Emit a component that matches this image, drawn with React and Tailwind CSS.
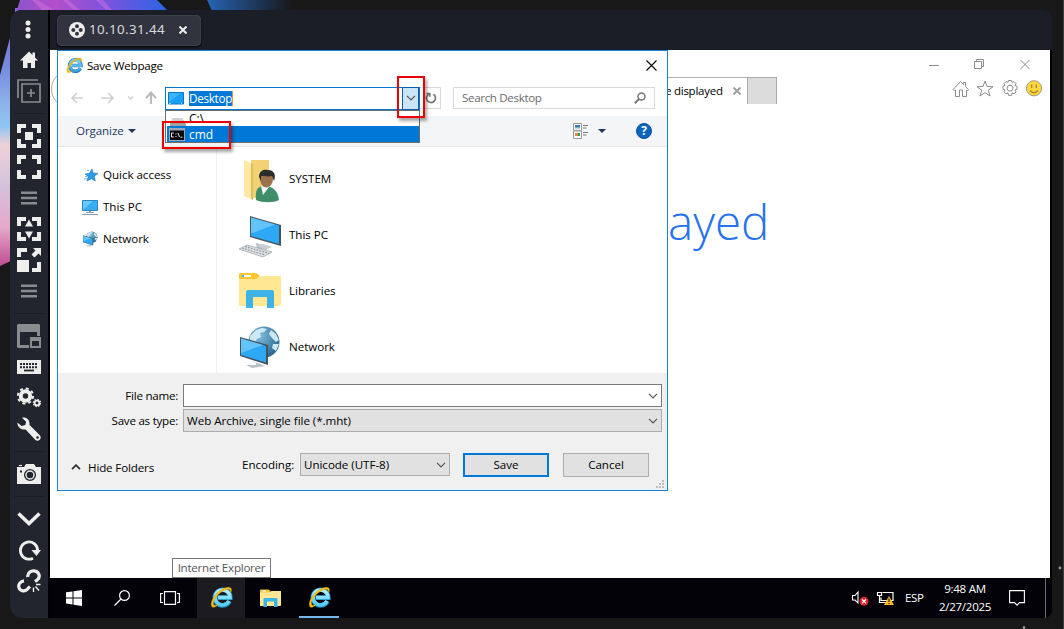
import React from 'react';

function IEIcon({ className, bright }) {
  const blue = bright ? '#55cdf5' : '#3aa0dc';
  const id = bright ? 'ieb' : 'iea';
  return (
    <svg viewBox="0 0 24 24" className={className} fill="none">
      <defs>
        <linearGradient id={id} x1="0" y1="0" x2="0" y2="1">
          <stop offset="0" stopColor={bright ? '#b5effc' : '#7cd3f7'} />
          <stop offset="1" stopColor={blue} />
        </linearGradient>
      </defs>
      <path d="M20.2 16a8.1 8.1 0 1 1 1-3.9H8.6" stroke={bright ? '#1691cc' : '#1f76b6'} strokeWidth="4.8" />
      <path d="M20 15.6a7.8 7.8 0 1 1 .9-3.5H8" stroke={`url(#${id})`} strokeWidth="3.7" />
      <path d="M2.2 21.8C-1 18.5 4.5 8 12 3.8C17 .8 22.5.2 22.4 4.2c0 1-.3 1.9-.9 3C21.9 3 18.500 2.500 13.800 5C7 8.700 2.200 16.500 4 19.600c1 1.300 3.500.5 5-.3-2.500 2.200-5.300 3.800-6.800 2.500Z" fill="#f5bf15" stroke="#d99b06" strokeWidth=".4" />
    </svg>
  );
}

function Chevron({ className = 'h-[6px] w-[10px] text-[#555]', w = 1.2 }) {
  return (
    <svg viewBox="0 0 10 6" className={className} fill="none" stroke="currentColor" strokeWidth={w}>
      <path d="m1 .8 4 4 4-4" />
    </svg>
  );
}

/* ---------- viewer side toolbar ---------- */

const corners = (
  <path d="M2 9V2h7M15 2h7v7M22 15v7h-7M9 22H2v-7" stroke="currentColor" strokeWidth="4" />
);
const lines = (
  <path d="M4 6.700h16M4 12h16M4 17.300h16" stroke="#898b8f" strokeWidth="2.500" />
);

const toolGlyphs = {
  dots: (
    <g fill="currentColor">
      <circle cx="11" cy="6" r="2.500" /><circle cx="11" cy="12.500" r="2.500" /><circle cx="11" cy="19" r="2.500" />
    </g>
  ),
  home: <path d="M12 3.500 3 12.600h3V20h4.500v-5h3.500v5H18v-7.400h3L18 9.500V4.500h-2.500V7Z" fill="currentColor" />,
  add: (
    <g stroke="#898b8f" strokeWidth="1.700">
      <path d="M1 19V1h20M5 5h18v18H5ZM14 10v8M10 14h8" />
    </g>
  ),
  focus: <g>{corners}<path d="M8 8h8v8H8Z" fill="currentColor" /></g>,
  full: corners,
  lines,
  fit: <g>{corners}<path d="m12 2.500 4 7H8ZM12 21.500l-4-7h8Z" fill="currentColor" /></g>,
  scale: (
    <g>
      <path d="M2 9V2h8M22 14v8h-7" stroke="currentColor" strokeWidth="4" />
      <path d="M0 12h12v12H0ZM16 0h8v8l-2.500-2.500-4 4-3-3 4-4Z" fill="currentColor" />
    </g>
  ),
  windows: (
    <g>
      <path fillRule="evenodd" d="M1 0h21l1 1v11h-3V8H3v13h9v3H1l-1-1V1Z" fill="#898b8f" />
      <path fillRule="evenodd" d="M13 13h11v11H13ZM15 17v5h7v-5Z" fill="#898b8f" />
    </g>
  ),
  keyboard: (
    <g>
      <path d="M0 5h24v14H0Z" fill="currentColor" />
      <path d="M3 9h18M3 12.300h18" stroke="#22252e" strokeWidth="2" strokeDasharray="2 1" />
      <path d="M7 15.500h10" stroke="#22252e" strokeWidth="1.800" />
    </g>
  ),
  gears: (
    <g stroke="currentColor">
      <circle cx="8.500" cy="10" r="4.700" strokeWidth="4" />
      <circle cx="8.500" cy="10" r="7.600" strokeWidth="2" strokeDasharray="3 2.970" />
      <circle cx="20" cy="17" r="2.400" strokeWidth="1.900" />
      <circle cx="20" cy="17" r="3.700" strokeWidth="1.100" strokeDasharray="1.500 1.400" />
    </g>
  ),
  wrench: (
    <path
      fillRule="evenodd"
      d="M5 .8c4-1.300 8.300 2 7.400 7l10.400 10.400c2.800 3-1.400 7.600-4.600 4.600L8.600 12.400C4.400 13.400.3 10 .3 5.500l4.300 3.600 3.700-1.200.8-3.200ZM20.500 19.200a1.300 1.300 0 1 0 .1 2.600 1.300 1.300 0 0 0-.1-2.600Z"
      fill="currentColor"
    />
  ),
  camera: (
    <g>
      <path d="M0 5h7l2-3h8l2 3h5v17H0Z" fill="currentColor" />
      <circle cx="13" cy="13" r="5.400" stroke="#22252e" strokeWidth="1.300" />
      <circle cx="13" cy="13" r="3.300" fill="#22252e" />
      <path d="M3 8.500h2v2H3Z" fill="#22252e" /><path d="M2 3.500h3" stroke="currentColor" strokeWidth="1.200" />
    </g>
  ),
  down: <path d="m1.500 6.500 10.500 10 10.500-10" stroke="currentColor" strokeWidth="3.600" />,
  refresh: (
    <g>
      <path d="M16 20.200A8.600 8.600 0 1 1 20.600 12" stroke="currentColor" strokeWidth="2.800" />
      <path d="M14.500 12H24L19.500 18Z" fill="currentColor" />
    </g>
  ),
  unlink: (
    <g stroke="currentColor" strokeWidth="3.200">
      <path d="M10.800 8C10.300 4 14 1.600 17 1.900c5 .5 7 5.800 3.300 9l-2.300 1.600" />
      <path d="M7 11.800C3.300 12.200 1.300 15.500 1.800 18c.8 4 5.600 5.200 8.600 2.200l2.500-2.700" />
      <path d="m16.500 18.500 0 4.500M18.500 17.500l3.500 4M19 15.500h4.500" strokeWidth="1.400" />
    </g>
  ),
};

function SideBar() {
  const items = ['dots', 'home', 'add', '-', 'focus', 'full', 'lines', 'fit', 'scale', 'lines', '-', 'windows', 'keyboard', 'gears', 'wrench', '-', 'camera', '-', 'down', 'refresh', 'unlink'];
  return (
    <aside className="flex h-[608px] w-[38px] shrink-0 flex-col items-center rounded-l-xl bg-[#22252e] pt-[3px] text-[#eeeeec]">
      {items.map((k, i) =>
        k === '-' ? (
          <div key={i} className="flex h-[14px] w-[30px] items-center"><div className="h-px w-full bg-[#1a1d24]" /></div>
        ) : (
          <button key={i} className="flex h-[31px] w-[38px] items-center justify-center">
            <svg viewBox="0 0 24 24" className="h-6 w-6" fill="none">{toolGlyphs[k]}</svg>
          </button>
        )
      )}
    </aside>
  );
}

/* ---------- file dialog ---------- */

function Monitor({ small }) {
  return small ? (
    <svg viewBox="0 0 16 16" className="mt-px h-4 w-4">
      <path d="M.5.500h15v10H.5Z" fill="#36adf5" stroke="#2c84b8" />
      <path d="M1 10 11 1H1Z" fill="#69c9ff" />
      <path d="M7 11h2v1.500H7ZM4 12h8v1H4ZM0 14h16v1H0Z" fill="#8b9ba9" />
    </svg>
  ) : (
    <svg viewBox="0 0 44 44" className="mt-[3px] h-11 w-11">
      <path d="m19 28 13 4-3 3-9-2Z" fill="#abb6bd" /><path d="m18 30 8-1 9 3-7 3Z" fill="#c7ced3" />
      <path d="m13 1 31 9v21L13 22Z" fill="#47525c" />
      <path d="m14 2.500 28 8V29l-28-8Z" fill="#2da8f5" /><path d="m14 2.500 24 7-24 9Z" fill="#63c4fb" />
      <path d="m2 34 8-4 25 7-9 5Z" fill="#dfe3e6" stroke="#a2a9ae" strokeWidth=".8" />
      <path d="m5 33 23 7M8 31.500l24 7" stroke="#969ea4" strokeWidth="1.200" strokeDasharray="2 1" />
    </svg>
  );
}

function NetworkIcon({ className }) {
  return (
    <svg viewBox="0 0 44 44" className={className}>
      <defs><radialGradient id="globe" cx=".35" cy=".3" r=".75"><stop stopColor="#82bfdc" /><stop offset="1" stopColor="#26668f" /></radialGradient></defs>
      <circle cx="27" cy="17" r="15.500" fill="url(#globe)" />
      <path d="m13 11 6-6 6-2 5 1-3 3-4 1 1 4-4 2-2 4-5-2ZM34 5l5 4 3 6-3 2-4-4-3-4ZM36 19l6 0-3 7-4-3Z" fill="#cde8f2" />
      <path d="m13 36 6 2v2l-10 0 6 3 13-2-7-3Z" fill="#b9c2c8" />
      <path d="m3 12 28 8v20L3 31Z" fill="#46525c" /><path d="m4 13.500 25 7.500v16.500L4 30Z" fill="#2da8f5" /><path d="m4 13.500 22 6.500L4 28Z" fill="#63c4fb" />
    </svg>
  );
}

function UserFolder() {
  return (
    <svg viewBox="0 0 44 44" className="mt-[4px] h-11 w-11">
      <path d="M14 1h18v38H14Z" fill="#f2d274" /><path d="m7 1 9 4v36l-9-4Z" fill="#ffe9a2" /><path d="m14 4 2 1v36l-2-1Z" fill="#e0bd5f" />
      <path d="M19 41c-1-9 1-14 8-14 9 0 14 5 15 14-5 3-17 3-23 0Z" fill="#3f8e69" />
      <path d="m24 27 2 9 6-8Z" fill="#f2f5f4" />
      <ellipse cx="29.500" cy="20" rx="6.500" ry="8.500" fill="#9d724e" />
      <path d="M22 18c0-7 6-8 9-7 7 0 8 6 6 11l-2-5c-3 1-9 0-11 0v5Z" fill="#2b2d2c" />
    </svg>
  );
}

function LibraryIcon({ className }) {
  return (
    <svg viewBox="0 0 44 44" className={className}>
      <path d="M2 7h21l2-1h18c1 0 1 1 1 2v26c0 1-1 2-2 2H3c-1 0-1-1-1-2Z" fill="#ffe794" />
      <path d="M3 3h16l4 3-4 3H2V4Z" fill="#fdc62f" />
      <path d="M5 5h9v2H5Z" fill="#fff" /><path d="M5 5h2v2H5Z" fill="#3cb4e7" />
      <path d="M9 38V22c0-1 1-2 2-2h24c1 0 2 1 2 2v16h-7V27H16v11Z" fill="#3cb4e7" />
    </svg>
  );
}

function NavRow() {
  return (
    <div className="flex h-6 items-center">
      <svg viewBox="0 0 94 24" className="ml-[10px] h-6 w-[94px] shrink-0" fill="none" stroke="#d0d0d0" strokeWidth="1.600">
        <path d="M15 12H4M9 7l-5 5 5 5M33 12h12M40 7l5 5-5 5" />
        <path d="m60 10.500 2.500 2.500 2.500-2.500" strokeWidth="1.300" />
        <path d="M83 18V7M78 12l5-5.500 5 5.500" stroke="#b9b9b9" strokeWidth="1.900" />
      </svg>
      <div className="relative ml-[3px] h-[23px] w-[255px] shrink-0 border border-[#0078d7] bg-white">
        <div className="flex h-full items-center">
          <svg viewBox="0 0 16 13" className="ml-[2px] h-[13px] w-4">
            <path d="M.5.500h15v11.500H.5Z" fill="#18a0f5" stroke="#0878c4" /><path d="m1 10 12-9H1Z" fill="#3db3ff" />
            <path d="M1 11.300h14" stroke="#bfe6ff" strokeDasharray="2 10 1 1" />
          </svg>
          <span className="mt-px ml-[5px] h-[15px] w-[44px] border-r border-[#ff8c32] bg-[#0078d7] text-[11.700px] leading-[15px] tracking-[-0.3px] whitespace-nowrap text-white">Desktop</span>
          <div className="mr-0 ml-auto flex h-[23px] w-[17px] items-center justify-center border border-[#0d5ea6] bg-[#cce4f7]"><Chevron /></div>
        </div>
        {/* history list */}
        <div className="absolute top-[22px] -left-px h-[33px] w-[255px] overflow-hidden border border-[#6d6d6d] bg-white pl-px">
          <div className="flex h-[15px] items-start overflow-hidden">
            <svg viewBox="0 0 16 10" className="mt-[7px] ml-[3px] h-[10px] w-4 shrink-0"><path d="M3 0h9l4 6v4H0V6Z" fill="#a2a2a2" /><path d="M3 0h9l3 5H1Z" fill="#d2d2d2" /></svg>
            <span className="ml-[3px] text-[12px] leading-[15px] text-black">C:\</span>
          </div>
          <div className="flex h-[16px] items-center bg-[#0078d7] text-white">
            <svg viewBox="0 0 16 13" className="mt-px ml-[2px] h-[13px] w-4 shrink-0">
              <path d="M0 0h16v13H0Z" fill="#9ba8b3" /><path d="M1 2.500h14V12H1Z" fill="#05070a" />
              <path d="M4.800 5H2.500v4h2.300M7 5.500v1M7 8v1M9 5l1.500 4M11.500 9.200h2" stroke="#fff" fill="none" strokeWidth=".9" />
            </svg>
            <span className="mt-[2px] ml-[4px] text-[12px] leading-4">cmd</span>
          </div>
        </div>
      </div>
      <div className="flex h-[22px] w-[21px] shrink-0 items-center justify-end border border-l-0 border-[#d9d9d9] pr-[3px]">
        <svg viewBox="0 0 12 12" className="h-3 w-3" fill="none" stroke="#777" strokeWidth="1.700"><path d="M8.500 2.300A4.500 4.500 0 1 1 4 2M1.500 1.500h3.300v3.300" /></svg>
      </div>
      <div className="ml-3 flex h-[22px] w-[202px] shrink-0 items-center border border-[#d9d9d9] pr-[8px] pl-2 text-[#6d6d6d]">
        <span className="text-[11.600px] leading-4 tracking-[-0.35px]">Search Desktop</span>
        <svg viewBox="0 0 12 12" className="ml-auto h-3 w-3" fill="none" stroke="#777" strokeWidth="1.500"><circle cx="7.500" cy="4.500" r="3.500" /><path d="M5 7 .8 11.200" strokeWidth="2" /></svg>
      </div>
    </div>
  );
}

function ToolRow() {
  return (
    <div className="mt-[6px] flex h-[31px] items-center border-b border-[#e6e7e8] bg-[#f4f5f7] pl-[18px] text-[#1e395b]">
      <span className="w-[51px] text-[11.600px] leading-4 tracking-[-0.1px]">Organize</span>
      <svg viewBox="0 0 8 4" className="ml-px h-1 w-2"><path d="M0 0h8L4 4Z" fill="#1e395b" /></svg>
      <svg viewBox="0 0 16 16" className="ml-[437px] h-4 w-4">
        <path d="M.5.500h8v6.800h-8ZM.5 8h8v7.500h-8Z" fill="#fff" stroke="#999" /><path d="M2 2h5v2H2Z" fill="#3579c4" /><path d="M2 4h5v1.500H2Z" fill="#7fb0a5" /><path d="M2 10h3v3H2Z" fill="#e08a3c" /><path d="M5 10h2v3H5Z" fill="#3c9248" />
        <path d="M10 2.500h5M10 5h3.500M10 9.500h5M10 12h3.500" stroke="#777" />
      </svg>
      <svg viewBox="0 0 8 4" className="ml-[9px] h-1 w-2"><path d="M0 0h8L4 4Z" fill="#1e395b" /></svg>
      <span className="ml-[30px] flex h-4 w-4 items-center justify-center rounded-full border border-[#0b4f96] bg-[#0c66c0] text-[12px] leading-none font-bold text-white">?</span>
    </div>
  );
}

const tree = [
  ['Quick access', (
    <svg viewBox="0 0 16 16" className="h-4 w-4"><path d="m10 2 1.200 4 4.800.4-3.700 2.900 1 4.700-3.800-2.300L5 14l1.200-4.400L3 7l4.300-.6Z" fill="#2a9be4" stroke="#1b79c4" strokeWidth=".6" /><path d="M5 3.500h2M3 9.500h2M2 12h3" stroke="#6fb9e6" /></svg>
  )],
  ['This PC', <Monitor small />],
  ['Network', <NetworkIcon className="h-4 w-4" />],
];

const files = [
  ['SYSTEM', <UserFolder />],
  ['This PC', <Monitor />],
  ['Libraries', <LibraryIcon className="mt-[2px] h-11 w-11" />],
  ['Network', <NetworkIcon className="h-11 w-11" />],
];

function Field({ label, children, white }) {
  return (
    <div className="flex items-center">
      <span className="w-[120px] shrink-0 text-right tracking-[-0.25px]">{label}</span>
      <div className={`ml-[5px] flex h-[23px] w-[479px] items-center justify-between border pr-[3px] pl-[3px] ${white ? 'border-[#7a7a7a] bg-white' : 'border-[#acacac] bg-[#e1e1e1]'}`}>
        <span>{children}</span>
        <Chevron />
      </div>
    </div>
  );
}

function SaveDialog() {
  return (
    <section className="absolute top-0 left-[7px] flex h-[441px] w-[611px] flex-col border border-[#1883d7] bg-white text-[11.600px] leading-4 tracking-[-0.04px] text-black">
      <div className="flex h-[35px] shrink-0 items-center pb-[6px] pl-2">
        <IEIcon className="h-[17px] w-[17px]" />
        <span className="ml-1 tracking-[-0.25px]">Save Webpage</span>
        <svg viewBox="0 0 11 11" className="mr-[10px] ml-auto h-[11px] w-[11px]" fill="none" stroke="#000" strokeWidth="1.100"><path d="m.5.500 10 10M10.500.500l-10 10" /></svg>
      </div>
      <NavRow />
      <ToolRow />
      <div className="flex h-[226px] shrink-0">
        <nav className="flex w-[159px] flex-col border-r border-[#f0f0f0] pt-[12px] pl-6">
          {tree.map(([name, icon]) => <div key={name} className="flex h-8 items-center gap-[5px]">{icon}<span>{name}</span></div>)}
        </nav>
        <div className="flex flex-col pt-[4px] pl-5">
          {files.map(([name, icon]) => <div key={name} className="flex h-14 shrink-0 items-center gap-2">{icon}<span>{name}</span></div>)}
        </div>
      </div>
      <footer className="relative flex flex-1 flex-col bg-[#f0f0f0] pt-[11px]">
        <div className="flex flex-col gap-[2px]">
          <Field label="File name:" white />
          <Field label="Save as type:">Web Archive, single file (*.mht)</Field>
        </div>
        <div className="mt-[19px] flex items-center">
          <Chevron className="mt-[6px] ml-[13px] h-[6px] w-[10px] rotate-180 text-[#333]" w={1.800} />
          <span className="mt-[7px] ml-[7px] w-[80px] tracking-[-0.15px]">Hide Folders</span>
          <span className="mt-px ml-[74px] w-[58px]">Encoding:</span>
          <div className="mt-px flex h-[23px] w-[150px] items-center justify-between border border-[#acacac] bg-[#e1e1e1] pr-[3px] pl-[3px]"><span>Unicode (UTF-8)</span><Chevron /></div>
          <button className="mt-[2px] ml-[13px] h-6 w-[86px] border-2 border-[#0078d7] bg-[#e1e1e1]">Save</button>
          <button className="mt-[2px] ml-[14px] h-6 w-[86px] border border-[#adadad] bg-[#e1e1e1]">Cancel</button>
        </div>
        <svg viewBox="0 0 8 8" className="absolute right-[3px] bottom-[2px] h-2 w-2" fill="#bdbdbd"><path d="M6 0h2v2H6ZM3 3h2v2H3ZM6 3h2v2H6ZM0 6h2v2H0ZM3 6h2v2H3ZM6 6h2v2H6Z" /></svg>
      </footer>
      <div className="absolute top-[25px] left-[339px] h-[42px] w-[28px] border-2 border-[#ee0000] shadow-[2px_3px_3px_rgba(0,0,0,0.35)]" />
      <div className="absolute top-[70px] left-[104px] h-[28px] w-[69px] border-2 border-[#ee0000] shadow-[2px_3px_3px_rgba(0,0,0,0.35)]" />
    </section>
  );
}

/* ---------- remote desktop ---------- */

function Browser() {
  return (
    <div className="relative h-[528px] w-[1000px] overflow-hidden bg-white">
      <svg viewBox="0 0 8 40" className="absolute top-[19px] left-0 h-10 w-2" fill="none" stroke="#aaa"><circle cx="20.500" cy="20" r="19" /></svg>
      <div className="flex h-[27px] items-center justify-end pr-[19px] text-[#8a8a8a]">
        <svg viewBox="0 0 102 12" className="h-3 w-[102px]" fill="none" stroke="currentColor">
          <path d="M0 7.500h10M45.500 3.500h7v7h-7ZM47.500 3.500v-2h7v7h-2M91.500 2l9 9M100.500 2l-9 9" />
        </svg>
      </div>
      <div className="flex h-[27px] items-start pl-[608px]">
        <div className="flex h-[27px] w-[89px] items-center border-t border-[#b0b0b0] pl-[7px]">
          <span className="text-[11.500px] tracking-[-0.25px] whitespace-nowrap">e displayed</span>
          <svg viewBox="0 0 8 8" className="ml-auto mr-[6px] h-2 w-2 shrink-0" stroke="#a0a0a0" strokeWidth="2"><path d="m.5.500 7 7M7.500.500l-7 7" /></svg>
        </div>
        <div className="h-[27px] w-[30px] border border-b-0 border-[#aaa] bg-[#dcdcdc]" />
        <svg viewBox="0 0 90 17" className="mt-[3px] ml-auto mr-[8px] h-[17px] w-[90px]" fill="none" stroke="#8d8d8d">
          <path d="m1 9.500 2-2 5.500-6 3 3v-2h2v4l3 3-1 1.500-1-1v6.500h-4V10h-3v6.500h-4V10l-1 .5Z" />
          <path d="m33 1 2 5.500 6 .2-4.800 3.600 1.900 5.700-5.100-3.400-5.100 3.400 1.900-5.700L25 6.700l6-.2Z" />
          <path d="M56.500.500h3l.5 2 2-1 2 2-1 2 2 .7v3l-2 .7 1 2-2 2-2-1-.5 2.500h-3l-.5-2.500-2 1-2-2 1-2-2-.7v-3l2-.7-1-2 2-2 2 1Z" /><circle cx="58" cy="8.200" r="3" />
          <circle cx="82" cy="8.300" r="7.600" fill="#ffd83d" stroke="#9b9b88" /><path d="M79.700 4.500v3.500M84.300 4.500v3.500M78 10.500q4 4.500 8 0" stroke="#a4802c" strokeWidth="1.300" />
        </svg>
      </div>
      <h1 className="pt-[85px] pl-[618px] text-[47.500px] leading-[66px] font-light text-[#2672ec]">ayed</h1>
      <SaveDialog />
      <div className="absolute top-[508px] left-[122px] flex h-5 w-[99px] items-center justify-center border border-[#767676] bg-white text-[11.600px] tracking-[-0.25px] whitespace-nowrap text-[#575757]">Internet Explorer</div>
    </div>
  );
}

function TaskBar() {
  return (
    <footer className="flex h-10 w-[1002px] items-center rounded-br-lg bg-[#020208] text-white">
      <div className="flex h-10 w-12 items-center justify-center"><svg viewBox="0 0 16 16" className="h-4 w-4" fill="#fff"><path d="m0 2.300 6.500-.9v6H0ZM7.500 1.200 16 0v7.500H7.500ZM0 8.500h6.500v6L0 13.600ZM7.500 8.500H16V16l-8.500-1.200Z" /></svg></div>
      <div className="flex h-10 w-12 items-center justify-center"><svg viewBox="0 0 16 16" className="h-4 w-4" fill="none" stroke="#fff" strokeWidth="1.200"><circle cx="10.500" cy="5.500" r="4.900" /><path d="M7 9 .5 15.500" /></svg></div>
      <div className="flex h-10 w-12 items-center justify-center"><svg viewBox="0 0 20 14" className="h-[14px] w-5" fill="none" stroke="#fff" strokeWidth="1.200"><path d="M4.500.600h11v12.800h-11ZM3 2.500H.6v9H3M17 2.500h2.400v9H17" /></svg></div>
      <div className="ml-[3px] flex h-10 w-12 items-center justify-center bg-[#1b1b20] pb-px"><IEIcon bright className="h-[23px] w-[23px]" /></div>
      <div className="flex h-10 w-[49px] items-center justify-center"><LibraryIcon className="mt-px h-[22px] w-[22px]" /></div>
      <div className="flex h-10 w-[50px] flex-col items-center pt-2"><IEIcon bright className="h-[23px] w-[23px]" /><div className="mt-[7px] h-[2px] w-10 bg-[#76b9ed]" /></div>
      <svg viewBox="0 0 42 16" className="ml-[508px] h-4 w-[42px]" fill="none" stroke="#fff">
        <path d="M.5 5.500H3l3-3.500v11l-3-3H.5Z" strokeWidth="1.100" />
        <circle cx="12" cy="11.200" r="4.500" fill="#df202c" stroke="none" /><path d="m10 9.200 4 4M14 9.200l-4 4" strokeWidth="1.300" />
        <path d="M30.500 2.500h10.500v8H29v-3M25.500 2.500h4v3h-4ZM27.500 6v6.500h7" strokeWidth="1.200" />
        <path d="m37 6 5 9H32Z" fill="#f8b928" stroke="none" /><path d="M37 8.500v3.500M37 13v1" stroke="#332500" strokeWidth="1.200" />
      </svg>
      <span className="ml-[11px] w-[22px] text-[11.500px] tracking-[-0.3px]">ESP</span>
      <div className="ml-[9px] w-[58px] text-center text-[11.500px] leading-[18px] tracking-[-0.25px] whitespace-nowrap"><div>9:48 AM</div><div>2/27/2025</div></div>
      <svg viewBox="0 0 16 16" className="ml-[15px] h-4 w-4" fill="none" stroke="#fff" strokeWidth="1.100"><path d="M.6.600h14.800v12h-4.900L8 15.200l-2.500-2.600H.6Z" /></svg>
      <div className="ml-5 h-10 w-px bg-[#6a6a70]" />
    </footer>
  );
}

function Wallpaper() {
  return (
    <svg viewBox="0 0 1064 629" className="absolute inset-0 h-full w-full">
      <defs>
        <linearGradient id="top"><stop stopColor="#8a54ce" /><stop offset=".25" stopColor="#b44fcb" /><stop offset=".55" stopColor="#8152dd" /><stop offset="1" stopColor="#2466e8" /></linearGradient>
        <linearGradient id="streak"><stop stopColor="#2563b5" /><stop offset="1" stopColor="#181818" /></linearGradient>
        <linearGradient id="side" x1="0" y1="0" x2="0" y2="1"><stop stopColor="#9163d4" /><stop offset=".22" stopColor="#7489df" /><stop offset=".38" stopColor="#8fb5ea" /><stop offset=".46" stopColor="#8fc5f1" /><stop offset=".53" stopColor="#efd1d8" /><stop offset=".68" stopColor="#d3c3dc" /><stop offset=".85" stopColor="#e6a9cb" /><stop offset="1" stopColor="#bf4b91" /></linearGradient>
      </defs>
      <path d="M0 0h1064v629H0Z" fill="#181818" />
      <path d="M20 0h137l16 16H15Z" fill="url(#top)" />
      <path d="m38 0 17 11H43L32 0ZM68 0l13 11h-7L63 0ZM103 0l10 11h-6L96 0Z" fill="#d477df" opacity=".45" />
      <path d="M207 0h85v11h-80Z" fill="url(#streak)" />
      <path d="M18 8 0 75v191l15-7V8Z" fill="url(#side)" />
      <circle cx="1060" cy="568" r="1.400" fill="#999" /><circle cx="1024" cy="627.500" r="1.300" fill="#aaa" />
      <path d="M1063 0h1v629h-1Z" fill="#3c3c3c" />
    </svg>
  );
}

export default function App() {
  return (
    <div className="relative h-[629px] w-[1064px] overflow-hidden bg-[#181818] pt-[10px] pl-[10px] font-['Open_Sans','Noto_Sans',sans-serif]">
      <Wallpaper />
      <div className="relative flex h-[608px] w-[1042px] rounded-xl bg-black">
        <SideBar />
        <main className="ml-[2px] w-[1002px]">
          <header className="flex h-10 items-center rounded-tr-lg bg-[#1b1e26] pl-[7px]">
            <div className="flex h-[31px] w-[144px] items-center rounded-[4px] border border-[#3d404b] bg-[#31343f] pl-[11px] text-[#d8dade] shadow-[0_1px_2px_#000]">
              <svg viewBox="0 0 16 16" className="h-4 w-4 shrink-0">
                <circle cx="8" cy="8" r="8" fill="#eee" /><g fill="#31343f"><circle cx="8" cy="4.300" r="2" /><circle cx="4.300" cy="8" r="2" /><circle cx="11.700" cy="8" r="2" /><circle cx="8" cy="11.700" r="2" /></g>
              </svg>
              <span className="ml-1 font-['Noto_Sans',sans-serif] text-[13.330px] tracking-[0.400px]">10.10.31.44</span>
              <svg viewBox="0 0 8 8" className="ml-[14px] h-2 w-2 shrink-0" stroke="#eee" strokeWidth="2"><path d="m.5.500 7 7M7.500.500l-7 7" /></svg>
            </div>
          </header>
          <Browser />
          <TaskBar />
        </main>
      </div>
    </div>
  );
}
